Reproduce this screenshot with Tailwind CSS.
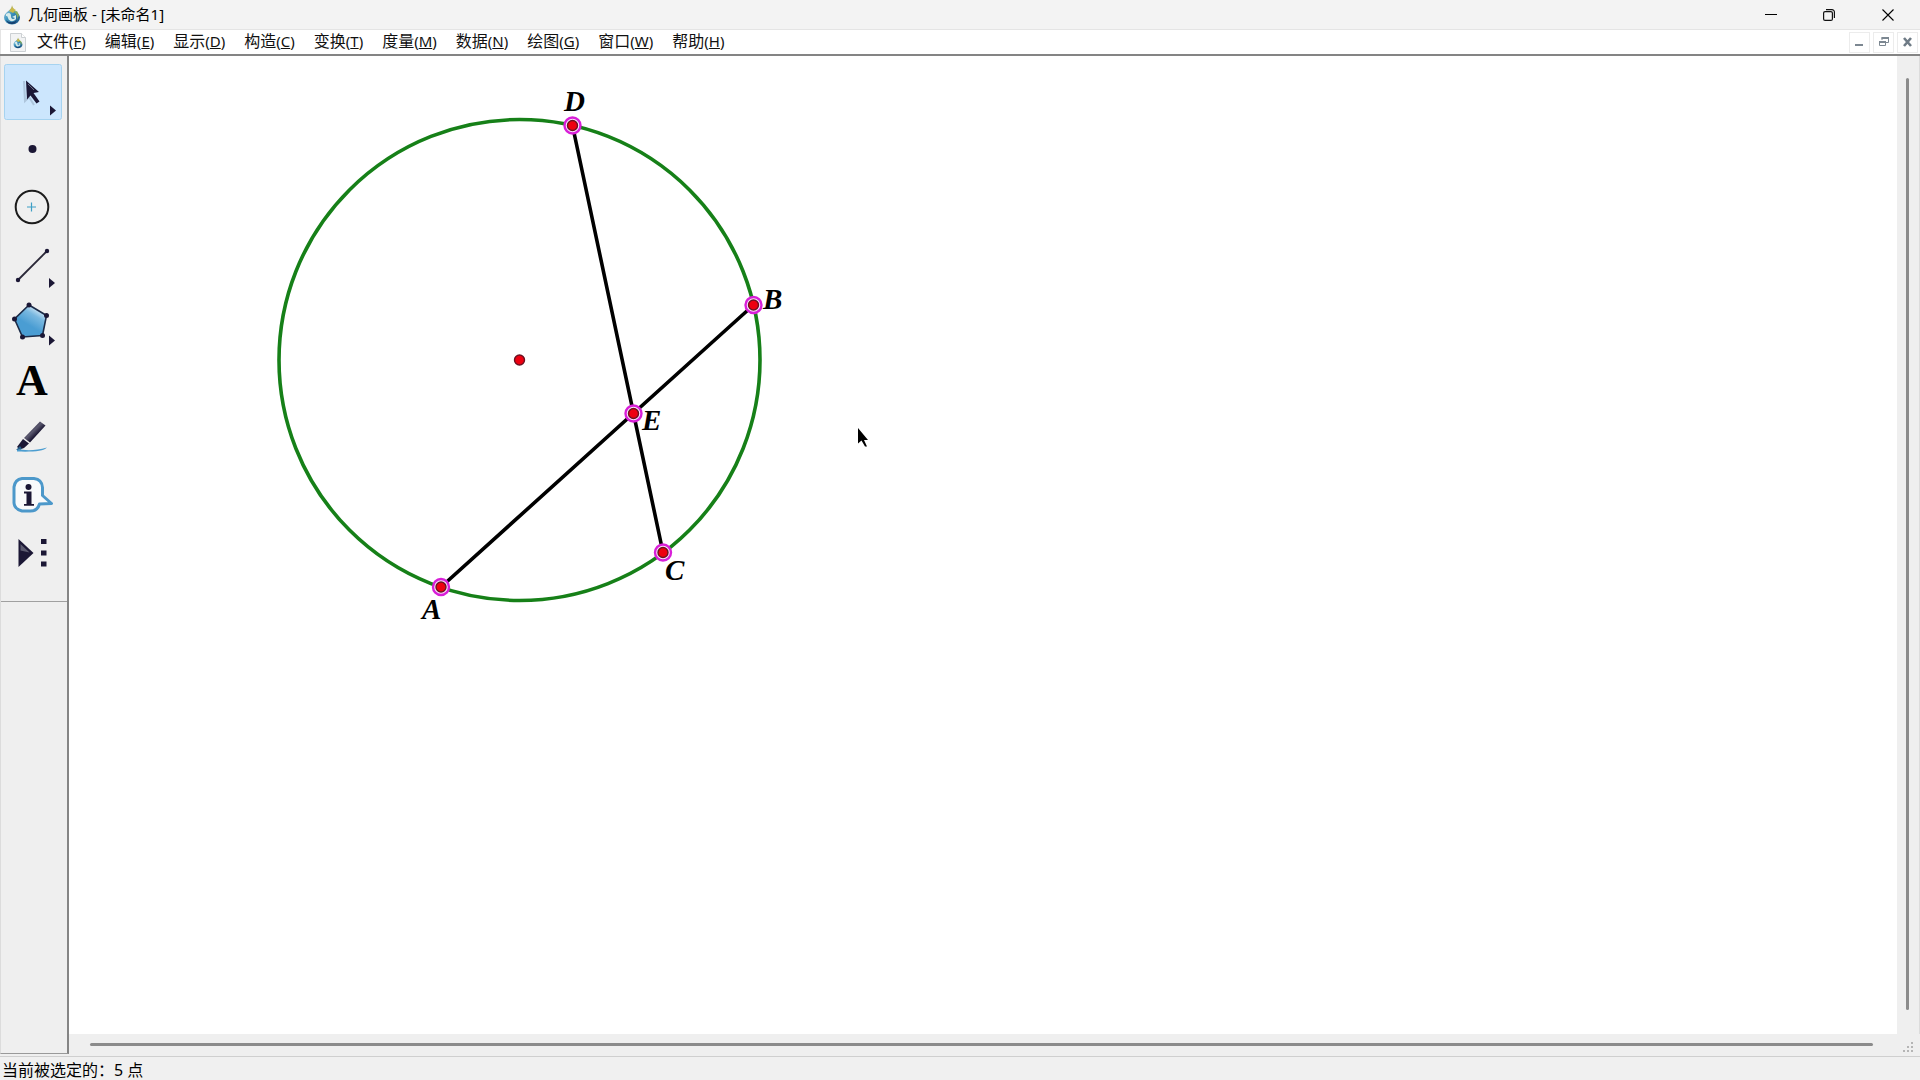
<!DOCTYPE html>
<html lang="zh-CN">
<head>
<meta charset="utf-8">
<title>几何画板 - [未命名1]</title>
<script src="https://cdn.jsdelivr.net/npm/@tailwindcss/browser@4"></script>
</head>
<body class="flex h-screen flex-col overflow-hidden bg-[#efefef] font-['Noto_Sans','Noto_Sans_CJK_SC',sans-serif] text-black">

<svg class="absolute h-0 w-0" aria-hidden="true">
  <defs>
    <linearGradient id="dropBlue" x1="0" y1="0" x2="1" y2="1"><stop offset="0" stop-color="#b9dcea"/><stop offset=".45" stop-color="#3b93bd"/><stop offset="1" stop-color="#174f80"/></linearGradient>
    <linearGradient id="pent" x1=".7" y1=".1" x2=".4" y2=".6"><stop offset="0" stop-color="#cfe6f6"/><stop offset=".4" stop-color="#79b8e0"/><stop offset="1" stop-color="#4a9dd3"/></linearGradient>
    <linearGradient id="dark" x1=".2" y1=".2" x2=".8" y2=".8"><stop offset="0" stop-color="#17132f"/><stop offset=".4" stop-color="#5b596f"/><stop offset=".7" stop-color="#17132f"/></linearGradient>
    <symbol id="logo" viewBox="0 0 18 20">
      <path d="M9 1C9 5 1 7 1 12.500a8 7 0 0 0 16 0C17 8 10 6 9 1z" fill="url(#dropBlue)"/>
      <path d="M9 0c0 3-2 4-3 6l4 2 3-3C11 4 9.500 3 9 0z" fill="#c9b94a"/>
      <path d="M3 9c3-2 5-1 5 2s2 4 4 2l-3-1 4-2v4c-2 3-7 3-8-1C4.500 11 4 11 3 11z" fill="#d6ebea"/>
      <path d="M11 7l3-1 2 4-2 5c1-3 0-6-3-8z" fill="#86ad5b"/>
      <path d="M3 15c3 3 8 3 11 0-1 3-3 4-5 4s-5-1-6-4z" fill="#163e6e"/>
    </symbol>
  </defs>
</svg>

<header class="flex h-[29px] shrink-0 items-center bg-[#f3f3f3] pl-[3px]">
  <svg class="h-5 w-[18px]"><use href="#logo"/></svg>
  <h1 class="ml-[7px] flex-1 pb-[2px] text-[15px] leading-5">几何画板 - [未命名1]</h1>
  <div class="flex pr-[3px]">
    <button aria-label="最小化" class="flex h-[29px] w-[58px] items-center justify-center"><svg class="size-3" viewBox="0 0 12 12"><path d="M0 5.500h12" stroke="#000"/></svg></button>
    <button aria-label="还原" class="flex h-[29px] w-[58px] items-center justify-center"><svg class="size-3" viewBox="0 0 12 12" fill="none" stroke="#111" stroke-width="1.200"><rect x=".6" y="2.600" width="8.800" height="8.800" rx="1.500"/><path d="M3 .6h6a2.400 2.400 0 0 1 2.400 2.400v6"/></svg></button>
    <button aria-label="关闭" class="flex h-[29px] w-[59px] items-center justify-center"><svg class="size-3" viewBox="0 0 12 12"><path d="M.5.5l11 11M11.500.5l-11 11" stroke="#000" stroke-width="1.100"/></svg></button>
  </div>
</header>

<nav class="flex h-[25px] shrink-0 items-center border-t border-l border-[#e4e4e4] bg-white pl-[9px]">
  <svg class="h-[19px] w-4" viewBox="0 0 16 19"><path d="M.5.5h11l4 4v14H.5z" fill="#f2f3f4" stroke="#ccd0d3"/><path d="M11.500.5v4h4" fill="#fff" stroke="#ccd0d3"/><use href="#logo" x="3" y="4" width="10" height="12"/></svg>
  <div class="flex flex-1 gap-px pb-[2px] text-[16px] leading-[22px] text-[#111]">
    <button class="px-[9px] pl-[11px]">文件<span class="text-[15px]">(<u>F</u>)</span></button>
    <button class="px-[9px]">编辑<span class="text-[15px]">(<u>E</u>)</span></button>
    <button class="px-[9px]">显示<span class="text-[15px]">(<u>D</u>)</span></button>
    <button class="px-[9px]">构造<span class="text-[15px]">(<u>C</u>)</span></button>
    <button class="px-[9px]">变换<span class="text-[15px]">(<u>T</u>)</span></button>
    <button class="px-[9px]">度量<span class="text-[15px]">(<u>M</u>)</span></button>
    <button class="px-[9px]">数据<span class="text-[15px]">(<u>N</u>)</span></button>
    <button class="px-[9px]">绘图<span class="text-[15px]">(<u>G</u>)</span></button>
    <button class="px-[9px]">窗口<span class="text-[15px]">(<u>W</u>)</span></button>
    <button class="px-[9px]">帮助<span class="text-[15px]">(<u>H</u>)</span></button>
  </div>
  <div class="flex gap-[3px] pr-[2px]">
    <button aria-label="最小化文档" class="flex h-[21px] w-[21px] items-center justify-center border border-[#ececec]"><svg class="size-3" viewBox="0 0 12 12"><path d="M1 9h8" stroke="#7c8791" stroke-width="2"/></svg></button>
    <button aria-label="还原文档" class="flex h-[21px] w-[21px] items-center justify-center border border-[#ececec]"><svg class="size-3" viewBox="0 0 12 12" fill="none" stroke="#7c8791"><path d="M4 4V1.500h6.500v5H8M1.500 5.500h6v4h-6z"/><path d="M3.500 2h7.500M1 6h7" stroke-width="2"/></svg></button>
    <button aria-label="关闭文档" class="flex h-[21px] w-[21px] items-center justify-center border border-[#ececec]"><svg class="size-3" viewBox="0 0 12 12"><path d="M2 2l7 8M9 2l-7 8" stroke="#6f7b86" stroke-width="2.600"/></svg></button>
  </div>
</nav>

<div class="flex min-h-0 flex-1 border-t-2 border-[#848484]">
  <aside class="mb-[2px] flex w-[69px] shrink-0 flex-col border-r-2 border-b border-l border-r-[#858585] border-b-[#999] border-l-[#dcdcdc]">
    <div class="flex h-[546px] flex-col border-b border-[#a0a0a0] pt-[7px] pl-[3px]">
      <button aria-label="移动箭头工具" class="h-[58px] w-[58px]"><svg class="h-[58px] w-[58px]" viewBox="4 63 58 58"><rect x="4.500" y="64.500" width="57" height="55" rx="2" fill="#cce6fd" stroke="#a6d3f0"/><path d="M24 81l1 20 4-4 5 8" fill="none" stroke="#8fa5bb" stroke-width="2" opacity=".5"/><path d="M26 80.500l13 11.500-5.500 1 6 8.500-3 2-6-8-3.500 4z" fill="#1b1735"/><path d="M28 84l6 6" stroke="#6a7186"/><path d="M50 105.500l6 5-6 5z" fill="#1b1735"/></svg></button>
      <button aria-label="点工具" class="h-[58px] w-[58px]"><svg class="h-[58px] w-[58px]" viewBox="4 121 58 58"><circle cx="32.500" cy="149" r="4" fill="#1b1735"/></svg></button>
      <button aria-label="圆工具" class="h-[58px] w-[58px]"><svg class="h-[58px] w-[58px]" viewBox="4 179 58 58"><circle cx="32" cy="207" r="16.300" fill="none" stroke="#1c1c1c" stroke-width="2"/><path d="M27 207h9M31.500 202.500v9" stroke="#3e9fc6" stroke-width="1.200"/></svg></button>
      <button aria-label="线段工具" class="h-[58px] w-[58px]"><svg class="h-[58px] w-[58px]" viewBox="4 237 58 58"><path d="M18 280l29-29" stroke="#2a2838" stroke-width="1.800"/><circle cx="18" cy="280" r="2.200" fill="#1b1735"/><circle cx="47" cy="251" r="2.200" fill="#1b1735"/><path d="M49 278l6 5-6 5z" fill="#1b1735"/></svg></button>
      <button aria-label="多边形工具" class="h-[58px] w-[58px]"><svg class="h-[58px] w-[58px]" viewBox="4 295 58 58"><path d="M29 305l17.500 10.500-4 20-20 1.500L14.500 319z" fill="url(#pent)" stroke="#1b2b48" stroke-width="1.600"/><g fill="#1b1735"><circle cx="29" cy="305" r="2.500"/><circle cx="46.500" cy="315.500" r="2.500"/><circle cx="42.500" cy="335.500" r="2.500"/><circle cx="22.500" cy="337" r="2.500"/><circle cx="14.500" cy="319" r="2.500"/></g><path d="M49 335.500l6 5-6 5z" fill="#1b1735"/></svg></button>
      <button aria-label="文本工具" class="flex h-[58px] w-[58px] items-center justify-center pr-[2px] pb-[2px] font-['Liberation_Serif',serif] text-[44px] leading-[44px] font-bold">A</button>
      <button aria-label="标记工具" class="h-[58px] w-[58px]"><svg class="h-[58px] w-[58px]" viewBox="4 411 58 58"><path d="M17 449c8 1.500 18 2 30-1.500-3 4-16 4.500-30 4z" fill="#4b9dd0"/><path d="M40 421.500l5.500 4-15.500 17-6-4.500z" fill="url(#dark)"/><path d="M23 439l6 4.500-5 4.500-4 1.500-3-2.500z" fill="#1b1735"/><path d="M16 450l4-4 2 3z" fill="#245f8b"/></svg></button>
      <button aria-label="信息工具" class="h-[58px] w-[58px]"><svg class="h-[58px] w-[58px]" viewBox="4 469 58 58"><path d="M22 478.500h12q8 1 8.500 9v8l9 8-12 .5q-2 7-9 7H22q-7.500-2-8-8V487q1-7.500 8-8.500z" fill="#f8fafb" stroke="#4c98ca" stroke-width="3" stroke-linejoin="round"/><circle cx="28.500" cy="487" r="3" fill="#1b1735"/><path d="M24 491.500h7.500v12.500H34v1.800H24V504h2.500v-10.500H24z" fill="#1b1735"/></svg></button>
      <button aria-label="自定义工具" class="h-[58px] w-[58px]"><svg class="h-[58px] w-[58px]" viewBox="4 527 58 58"><path d="M18.500 539l15 14-15 14z" fill="#1b1735"/><path d="M20.500 544l9 8.500-9-2z" fill="#5c5b70"/><path d="M41 539h5.500v5H41zM41 550.500h5.500v5H41zM41 561.500h5.500v5H41z" fill="#1b1735"/></svg></button>
    </div>
  </aside>

  <main class="flex min-w-0 flex-1 flex-col">
    <div class="flex min-h-0 flex-1">
      <div class="min-w-0 flex-1 bg-white">
        <svg class="h-full w-full" role="img" aria-label="圆与相交弦">
          <g transform="translate(-69 -56)">
            <circle cx="519.500" cy="360" r="240.500" fill="none" stroke="#168018" stroke-width="3.600"/>
            <path d="M572.500 125.500L663 552.500M753.500 305L441 587" stroke="#000" stroke-width="3.600"/>
            <g fill="#fbe3fb" stroke="#d81fd8" stroke-width="2.400">
              <circle cx="572.500" cy="125.500" r="8"/><circle cx="753.500" cy="305" r="8"/><circle cx="633.500" cy="413.500" r="8"/><circle cx="663" cy="552.500" r="8"/><circle cx="441" cy="587" r="8"/>
            </g>
            <g fill="#ee0010" stroke="#6d1020" stroke-width="1.400">
              <circle cx="572.500" cy="125.500" r="5"/><circle cx="753.500" cy="305" r="5"/><circle cx="633.500" cy="413.500" r="5"/><circle cx="663" cy="552.500" r="5"/><circle cx="441" cy="587" r="5"/><circle cx="519.500" cy="360" r="5"/>
            </g>
            <g class="font-['Liberation_Serif',serif] text-[29px] font-bold italic">
              <text x="564" y="111">D</text><text x="763" y="309">B</text><text x="642" y="430">E</text><text x="665" y="580">C</text><text x="422" y="619">A</text>
            </g>
            <path d="M858 428v15.500l3.500-3 3.500 6h2l-3-6.500h4z" fill="#000"/>
          </g>
        </svg>
      </div>
      <div class="flex w-[23px] justify-center border-r border-[#dcdcdc] pt-[22px] pr-[1px] pb-6"><div class="w-[3px] rounded bg-[#8b8b8b]"></div></div>
    </div>
    <div class="flex h-[22px] items-center pr-[6px] pb-[2px] pl-[21px]">
      <div class="h-[3px] flex-1 rounded bg-[#8b8b8b]"></div>
      <svg class="mt-[5px] ml-[29px] h-3 w-3" viewBox="0 0 12 12" fill="#b5b5b5"><path d="M9 1h2v2H9zM9 5h2v2H9zM5 5h2v2H5zM9 9h2v2H9zM5 9h2v2H5zM1 9h2v2H1z"/></svg>
    </div>
  </main>
</div>

<footer class="flex h-[24px] shrink-0 items-center border-t border-[#cfcfcf] bg-[#f0f0f0] pt-[2px] pl-[2px] text-[16px] leading-[22px] whitespace-pre">当前被选定的：5 点</footer>
</body>
</html>
